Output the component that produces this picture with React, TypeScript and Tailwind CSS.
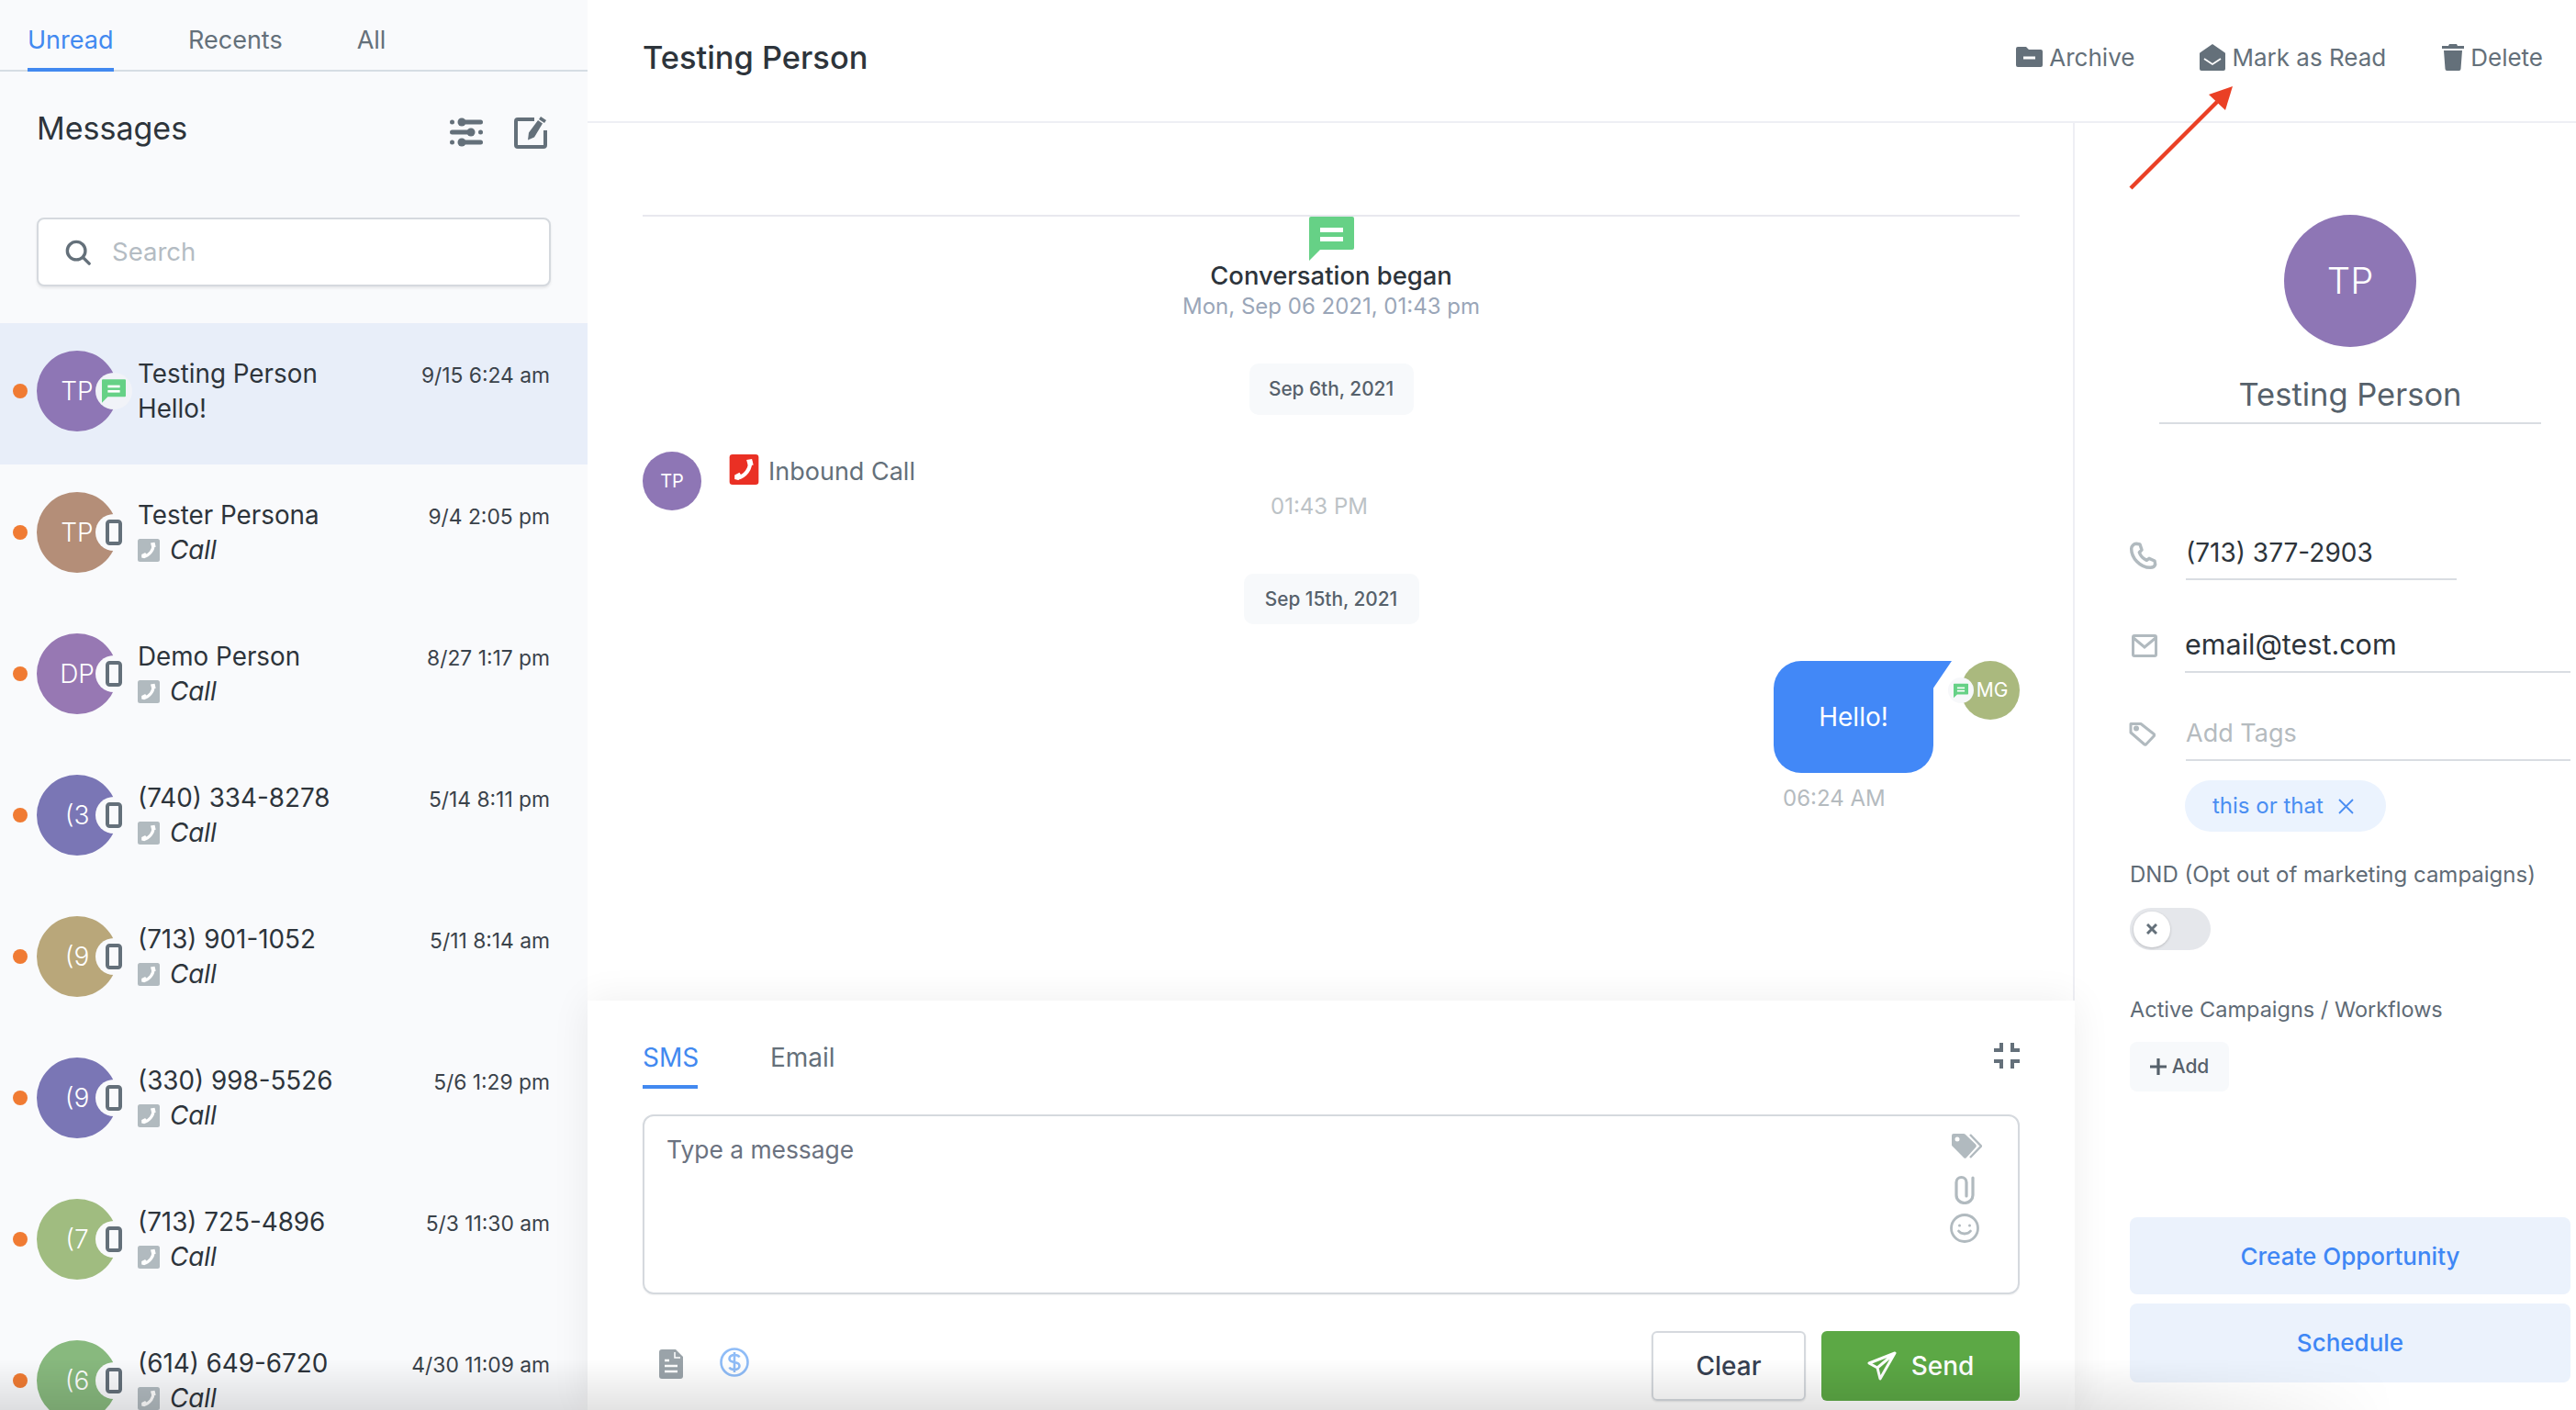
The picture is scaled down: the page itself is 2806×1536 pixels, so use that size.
import React from "react";

const Chat = ({ className = "", fill = "#66d186" }: { className?: string; fill?: string }) => (
  <svg viewBox="0 0 49 48" className={className}>
    <path d="M2 0H47a2 2 0 0 1 2 2V34a2 2 0 0 1-2 2H12L0 48V2a2 2 0 0 1 2-2Z" fill={fill} />
    <rect x="12" y="12" width="25" height="5" fill="#fff" />
    <rect x="12" y="22" width="25" height="5" fill="#fff" />
  </svg>
);

const PhoneSquare = ({ bg, className = "" }: { bg: string; className?: string }) => (
  <svg viewBox="0 0 24 25" className={className}>
    <rect width="24" height="25" rx="2.5" fill={bg} />
    <path d="M17 5.5C17.5 12 13 18 6.5 19.5" stroke="#fff" strokeWidth="3.2" fill="none" />
    <path d="M14 4.500l4.500-.8 1.200 5-4.300 1zM4.200 17l4-2 2.300 3.600-3.300 2.600-3-.8z" fill="#fff" />
  </svg>
);

const Mobile = () => (
  <svg viewBox="0 0 18 28" className="h-[28px] w-[18px]">
    <rect x="2" y="2" width="14" height="24" rx="2.5" fill="none" stroke="#64707a" strokeWidth="4" />
  </svg>
);

const rows = [
  { i: "TP", c: "bg-[#b48e78]", n: "Tester Persona", t: "9/4 2:05 pm" },
  { i: "DP", c: "bg-[#9778b3]", n: "Demo Person", t: "8/27 1:17 pm" },
  { i: "(3", c: "bg-[#7a76b5]", n: "(740) 334-8278", t: "5/14 8:11 pm" },
  { i: "(9", c: "bg-[#b9a77a]", n: "(713) 901-1052", t: "5/11 8:14 am" },
  { i: "(9", c: "bg-[#7a76b5]", n: "(330) 998-5526", t: "5/6 1:29 pm" },
  { i: "(7", c: "bg-[#a0bc80]", n: "(713) 725-4896", t: "5/3 11:30 am" },
  { i: "(6", c: "bg-[#88b97e]", n: "(614) 649-6720", t: "4/30 11:09 am" },
];

const Row = ({ i, c, n, t, active }: { i: string; c: string; n: string; t: string; active?: boolean }) => (
  <div className={`flex h-[154px] shrink-0 items-start pr-[41px] ${active ? "bg-[#e8eef9]" : ""}`}>
    <span className="ml-[14px] mt-[66px] h-[16px] w-[16px] shrink-0 rounded-full bg-[#f07b33]" />
    <div className={`relative ml-[10px] mt-[30px] flex h-[88px] w-[88px] shrink-0 items-center justify-center rounded-full text-[28px] font-light text-white ${c}`}>
      {i}
      <span className={`absolute left-[64px] top-[24px] flex h-[40px] w-[40px] items-center justify-center rounded-full ${active ? "bg-[#f1f3f8]" : "bg-[#f9fafc]"}`}>
        {active ? <Chat className="h-[30px] w-[26px]" /> : <Mobile />}
      </span>
    </div>
    <div className="ml-[22px] mt-[37px] min-w-0 flex-1 text-[27.8px] leading-[37px] text-[#2d343b]">
      <div className="flex items-baseline justify-between">
        <span>{n}</span>
        <span className="text-[22.8px] text-[#3a424a]">{t}</span>
      </div>
      {active ? (
        <div>Hello!</div>
      ) : (
        <div className="flex items-center">
          <PhoneSquare bg="#b1babf" className="h-[25px] w-[24px]" />
          <span className="ml-[11px] italic">Call</span>
        </div>
      )}
    </div>
  </div>
);

const Pill = ({ children, w }: { children: React.ReactNode; w: string }) => (
  <div className={`mx-auto flex items-center justify-center rounded-[10px] bg-[#f7f9fb] text-[20.8px] font-medium text-[#56616b] ${w}`}>
    {children}
  </div>
);

const Action = ({ icon, label, ml }: { icon: React.ReactNode; label: string; ml: string }) => (
  <div className={`flex items-center gap-[7px] text-[26px] text-[#64707a] ${ml}`}>
    {icon}
    <span>{label}</span>
  </div>
);

export default function App() {
  return (
    <div className="relative flex h-[1536px] w-[2806px] overflow-hidden bg-white [font-family:Inter,sans-serif]">
      {/* Sidebar */}
      <aside className="flex w-[640px] shrink-0 flex-col overflow-hidden bg-[#f9fafc]">
        <div className="flex h-[78px] shrink-0 border-b-2 border-[#d6dde4] pl-[30px] text-[27px] text-[#64707a]">
          <div className="h-[78px] w-[94px] border-b-4 border-[#4289f0] pt-[26px] leading-[36px] text-[#4289f0]">Unread</div>
          <div className="ml-[81px] pt-[26px] leading-[36px]">Recents</div>
          <div className="ml-[81px] pt-[26px] leading-[36px]">All</div>
        </div>
        <div className="mt-[40px] flex h-[44px] shrink-0 items-center pl-[40px] pr-[44px]">
          <span className="text-[34px] leading-[44px] text-[#2d343b]">Messages</span>
          <svg viewBox="0 0 36 32" className="ml-auto mt-[7px] h-[32px] w-[36px]" fill="#64707a">
            <circle cx="2.5" cy="5" r="2.5" /><rect x="10" y="2.5" width="26" height="5" rx="2.5" /><circle cx="13" cy="5" r="4.5" />
            <rect y="13.5" width="26" height="5" rx="2.5" /><circle cx="23" cy="16" r="4.5" /><circle cx="33.5" cy="16" r="2.5" />
            <circle cx="2.5" cy="27" r="2.5" /><rect x="10" y="24.5" width="26" height="5" rx="2.5" /><circle cx="13" cy="27" r="4.5" />
          </svg>
          <svg viewBox="0 0 36 36" className="ml-[34px] mt-[7px] h-[36px] w-[36px]">
            <path d="M22 4H4a2 2 0 0 0-2 2v26a2 2 0 0 0 2 2h28a2 2 0 0 0 2-2V16" fill="none" stroke="#64707a" strokeWidth="4" strokeLinejoin="round" />
            <path d="M26 5l5 3.500-9 15-7 3 1-8zM29 1l6 4-2 3-6-4z" fill="#64707a" />
          </svg>
        </div>
        <div className="ml-[40px] mt-[75px] flex h-[75px] w-[560px] shrink-0 items-center rounded-[8px] border-2 border-[#d5d9de] bg-white pl-[29px] shadow-[0_2px_3px_rgba(0,0,0,0.08)]">
          <svg viewBox="0 0 30 30" className="h-[28px] w-[28px]" fill="none" stroke="#64707a" strokeWidth="3.6" strokeLinecap="round">
            <circle cx="13" cy="13" r="10.5" /><path d="M21 21l7 7" />
          </svg>
          <span className="ml-[23px] text-[27.5px] text-[#b4bcc3]">Search</span>
        </div>
        <div className="mt-[40px] flex flex-col">
          <Row i="TP" c="bg-[#8e76b5]" n="Testing Person" t="9/15 6:24 am" active />
          {rows.map((r, k) => (
            <Row key={k} {...r} />
          ))}
        </div>
      </aside>

      {/* Main */}
      <main className="flex min-w-0 flex-1 flex-col">
        <header className="flex h-[134px] shrink-0 items-center border-b-2 border-[#eeeff4] pb-[6px] pl-[60px]">
          <h1 className="text-[34.4px] font-medium text-[#2d343b]">Testing Person</h1>
          <div className="ml-auto mb-[2px] flex items-center pr-[36px]">
            <Action
              label="Archive"
              ml=""
              icon={
                <svg viewBox="0 0 29 22" className="h-[22px] w-[29px]">
                  <path d="M2 0h9l3 3h13a2 2 0 0 1 2 2v15a2 2 0 0 1-2 2H2a2 2 0 0 1-2-2V2a2 2 0 0 1 2-2Z" fill="#64707a" />
                  <rect x="8" y="10.5" width="13" height="3" fill="#fff" />
                </svg>
              }
            />
            <Action
              label="Mark as Read"
              ml="ml-[71px]"
              icon={
                <svg viewBox="0 0 28 29" className="h-[29px] w-[28px]">
                  <path d="M14 0l13 9a2 2 0 0 1 1 2v16a2 2 0 0 1-2 2H2a2 2 0 0 1-2-2V11a2 2 0 0 1 1-2Z" fill="#64707a" />
                  <path d="M5 16l9 6 9-6" fill="none" stroke="#fff" strokeWidth="1.8" />
                </svg>
              }
            />
            <Action
              label="Delete"
              ml="ml-[61px]"
              icon={
                <svg viewBox="0 0 24 29" className="h-[29px] w-[24px]" fill="#64707a">
                  <path d="M8 0h8l1 2h7v3H0V2h7Z" /><path d="M2 7h20l-1.500 20a2 2 0 0 1-2 2h-13a2 2 0 0 1-2-2Z" />
                </svg>
              }
            />
          </div>
        </header>

        <div className="flex min-h-0 flex-1">
          {/* Conversation */}
          <section className="flex w-[1620px] shrink-0 flex-col shadow-[inset_-2px_0_0_#eeeff4]">
            <div className="mx-[60px] mt-[100px] h-[2px] shrink-0 bg-[#e8e8ef]" />
            <Chat className="mx-auto h-[48px] w-[49px] shrink-0" />
            <div className="text-center text-[27.4px] font-medium leading-[32px] text-[#2d343b]">Conversation began</div>
            <div className="mt-[2px] text-center text-[24px] leading-[32px] text-[#9aa6b8]">Mon, Sep 06 2021, 01:43 pm</div>
            <div className="mt-[46px]">
              <Pill w="h-[56px] w-[179px]">Sep 6th, 2021</Pill>
            </div>
            <div className="mx-[60px] mt-[40px] flex">
              <div className="flex h-[64px] w-[64px] shrink-0 items-center justify-center rounded-full bg-[#8e76b5] text-[20px] text-white">TP</div>
              <div className="ml-[30px] flex-1">
                <div className="flex h-[36px] items-start pt-[3px]">
                  <PhoneSquare bg="#ea3024" className="h-[33px] w-[33px]" />
                  <span className="ml-[10px] text-[27px] leading-[38px] text-[#64707a]">Inbound Call</span>
                </div>
                <div className="mt-[8px] pl-[590px] text-[24px] leading-[32px] text-[#bcc2c6]">01:43 PM</div>
              </div>
            </div>
            <div className="mt-[57px]">
              <Pill w="h-[55px] w-[191px]">Sep 15th, 2021</Pill>
            </div>
            <div className="mx-[60px] mt-[40px] flex justify-end">
              <div className="relative flex h-[122px] w-[174px] items-center justify-center rounded-[30px] rounded-tr-none bg-[#4288f7] text-[28px] text-white">
                Hello!
                <svg viewBox="0 0 21 31" className="absolute left-[173px] top-0 h-[31px] w-[21px]">
                  <path d="M0 0H21L0 31Z" fill="#4288f7" />
                </svg>
              </div>
              <div className="relative ml-[30px] flex h-[64px] w-[64px] items-center justify-center rounded-full bg-[#aab97e] pl-[4px] text-[21px] text-white">
                MG
                <span className="absolute left-[-14px] top-[18px] flex h-[28px] w-[28px] items-center justify-center rounded-full bg-[#f7f8fa]">
                  <Chat className="h-[17px] w-[16px]" />
                </span>
              </div>
            </div>
            <div className="ml-[1302px] mt-[12px] text-[24px] leading-[32px] text-[#b5bbbf]">06:24 AM</div>

            {/* Composer */}
            <div className="relative z-10 mt-auto flex h-[446px] shrink-0 flex-col bg-white px-[60px] pt-[44px] shadow-[0_0_40px_rgba(0,0,0,0.07)]">
              <div className="flex items-start text-[28px] leading-[36px]">
                <div className="h-[52px] w-[60px] border-b-4 border-[#4289f0] text-[#4289f0]">SMS</div>
                <div className="ml-[79px] text-[#64707a]">Email</div>
                <svg viewBox="0 0 28 28" className="ml-auto mt-[2px] h-[28px] w-[28px]" fill="none" stroke="#64707a" strokeWidth="4">
                  <path d="M0 8h8V0M20 0v8h8M0 20h8v8M20 28v-8h8" />
                </svg>
              </div>
              <div className="mt-[28px] flex h-[196px] justify-between rounded-[12px] border-2 border-[#d5d9de] shadow-[0_1px_2px_rgba(0,0,0,0.05)]">
                <span className="ml-[24px] mt-[18px] text-[26.4px] leading-[36px] text-[#6b7280]">Type a message</span>
                <div className="mr-[40px] mt-[19px] flex w-[36px] flex-col items-center">
                  <svg viewBox="0 0 33 27" className="ml-[4px] h-[27px] w-[33px]">
                    <path d="M2 0h11a2 2 0 0 1 1.500.6L26 11.500a2.500 2.500 0 0 1 0 3.500L16 26a2 2 0 0 1-3 0L.6 13.500A2 2 0 0 1 0 12V2a2 2 0 0 1 2-2Z" fill="#b1babf" />
                    <circle cx="6" cy="6" r="2.500" fill="#fff" />
                    <path d="M20 1l12 12.500L20 26" fill="none" stroke="#b1babf" strokeWidth="2.500" />
                  </svg>
                  <svg viewBox="0 0 22 32" className="mt-[18px] h-[32px] w-[22px]" fill="none" stroke="#b1babf" strokeWidth="3.200" strokeLinecap="round">
                    <path d="M20 3v19a9 8.500 0 0 1-18 0V8a5.500 5.500 0 0 1 11 0v15" />
                  </svg>
                  <svg viewBox="0 0 32 32" className="mt-[10px] h-[32px] w-[32px]" fill="none" stroke="#b1babf" strokeWidth="2.800" strokeLinecap="round">
                    <circle cx="16" cy="16" r="14.500" /><path d="M9.500 19c3 4 10 4 13 0" />
                    <circle cx="10.500" cy="13" r="1.500" fill="#b1babf" stroke="none" /><circle cx="21.500" cy="13" r="1.500" fill="#b1babf" stroke="none" />
                  </svg>
                </div>
              </div>
              <div className="mt-[40px] flex items-start">
                <svg viewBox="0 0 26 32" className="ml-[18px] mt-[20px] h-[32px] w-[26px]">
                  <path d="M3 0h15l8 8v21a3 3 0 0 1-3 3H3a3 3 0 0 1-3-3V3a3 3 0 0 1 3-3Z" fill="#9aa3a9" />
                  <path d="M17 3v6h6" fill="none" stroke="#fff" strokeWidth="1.500" />
                  <path d="M6 12h5M6 18h14M6 24h14" stroke="#fff" strokeWidth="2.500" />
                </svg>
                <svg viewBox="0 0 32 32" className="ml-[40px] mt-[18px] h-[32px] w-[32px]" fill="none" stroke="#8fbcf7" strokeWidth="2.600">
                  <circle cx="16" cy="16" r="14.500" />
                  <path d="M21.500 10.500c-1-2-3-2.500-5.500-2.500-3 0-5.500 1.500-5.500 4s2.500 3.500 5.500 4 5.500 1.500 5.500 4-2.500 4-5.500 4c-2.500 0-4.500-.5-5.500-2.500M16 5v22" />
                </svg>
                <div className="ml-auto flex h-[76px] w-[168px] items-center justify-center rounded-[6px] border-2 border-[#d5d9de] text-[28px] font-medium text-[#374151] shadow-[0_1px_2px_rgba(0,0,0,0.1)]">Clear</div>
                <div className="ml-[17px] flex h-[76px] w-[216px] items-center justify-center gap-[16px] rounded-[6px] bg-[#5ca845] text-[28px] font-medium text-white">
                  <svg viewBox="0 0 32 32" className="h-[32px] w-[32px]" fill="none" stroke="#fff" strokeWidth="3" strokeLinejoin="round">
                    <path d="M30 2L2 13l9 5 3 12ZM30 2L11 18" />
                  </svg>
                  Send
                </div>
              </div>
            </div>
          </section>

          {/* Contact */}
          <section className="flex min-w-0 flex-1 flex-col pb-[30px]">
            <div className="ml-[228px] mt-[100px] flex h-[144px] w-[144px] shrink-0 items-center justify-center rounded-full bg-[#8e76b5] text-[40px] font-light text-white">TP</div>
            <div className="ml-[92px] mt-[30px] w-[416px] border-b-2 border-[#d9dde2] pb-[8px] text-center text-[34.5px] leading-[44px] text-[#56616b]">Testing Person</div>

            <div className="mt-[122px] flex">
              <div className="ml-[59px] w-[62px] pt-[5px]">
                <svg viewBox="0 0 24 24" className="h-[32px] w-[32px]" fill="none" stroke="#b1babf" strokeWidth="2.600" strokeLinejoin="round">
                  <path d="M6 2.500l3 .5 1.500 4.500-2 2c.8 2.500 3 5 6 6.500l2-1.500 4.500 2 .5 3c-.5 1.500-2 2.500-4 2.500C9 22 2 14 2 6.500c0-2 2-4 4-4Z" />
                </svg>
              </div>
              <div className="w-[295px] border-b-2 border-[#d9dde2] pb-[10px] text-[28px] leading-[36px] text-[#2d343b]">(713) 377-2903</div>
            </div>
            <div className="mt-[50px] flex">
              <div className="ml-[62px] w-[58px] pt-[9px]">
                <svg viewBox="0 0 28 25" className="h-[25px] w-[28px]" fill="none" stroke="#b1babf" strokeWidth="3">
                  <rect x="1.500" y="1.500" width="25" height="22" rx="1.500" /><path d="M2 4l12 10 12-10" />
                </svg>
              </div>
              <div className="mr-[6px] flex-1 border-b-2 border-[#d9dde2] pb-[9px] text-[30.5px] leading-[40px] text-[#2d343b]">email@test.com</div>
            </div>
            <div className="mt-[48px] flex">
              <div className="ml-[59px] w-[62px] pt-[5px]">
                <svg viewBox="0 0 29 27" className="h-[27px] w-[29px]" fill="none" stroke="#b1babf" strokeWidth="3" strokeLinejoin="round">
                  <path d="M2 2.500h11l14 11a1.500 1.500 0 0 1 .5 2L19 24.500a1.500 1.500 0 0 1-2 .5L2 12Z" /><circle cx="8" cy="7.500" r="1.500" fill="#b1babf" />
                </svg>
              </div>
              <div className="mr-[6px] flex-1 border-b-2 border-[#d9dde2] pb-[10px] text-[27px] leading-[36px] text-[#b5bbbf]">Add Tags</div>
            </div>
            <div className="ml-[120px] mt-[21px] flex h-[56px] w-[219px] items-center rounded-full bg-[#ebf3fe] pl-[30px] text-[24px] text-[#4a8ef2]">
              this or that
              <svg viewBox="0 0 17 17" className="ml-[16px] h-[17px] w-[17px]" fill="none" stroke="#4a8ef2" strokeWidth="1.800">
                <path d="M1 1l15 15M16 1L1 16" />
              </svg>
            </div>
            <div className="ml-[60px] mt-[31px] text-[24px] leading-[32px] text-[#5f6b76]">DND (Opt out of marketing campaigns)</div>
            <div className="ml-[60px] mt-[20px] flex h-[46px] w-[88px] items-center rounded-full bg-[#e5e7eb] pl-[4px]">
              <span className="flex h-[39px] w-[40px] items-center justify-center rounded-full bg-white shadow-[0_1px_3px_rgba(0,0,0,0.2)]">
                <svg viewBox="0 0 12 12" className="h-[12px] w-[12px]" fill="none" stroke="#64707a" strokeWidth="3">
                  <path d="M1 1l10 10M11 1L1 11" />
                </svg>
              </span>
            </div>
            <div className="ml-[60px] mt-[49px] text-[23.5px] leading-[32px] text-[#5f6b76]">Active Campaigns / Workflows</div>
            <div className="ml-[60px] mt-[19px] flex h-[54px] w-[108px] items-center justify-center gap-[6px] rounded-[8px] bg-[#f7f9fb] text-[21px] font-medium text-[#56616b]">
              <svg viewBox="0 0 18 18" className="h-[18px] w-[18px]" fill="none" stroke="#56616b" strokeWidth="3.200"><path d="M9 0v18M0 9h18" /></svg>
              Add
            </div>
            <div className="ml-[60px] mr-[6px] mt-auto flex h-[84px] items-center justify-center rounded-[8px] bg-[#ebf2fc] text-[26px] font-medium text-[#3f87f5]">Create Opportunity</div>
            <div className="ml-[60px] mr-[6px] mt-[10px] flex h-[86px] items-center justify-center rounded-[8px] bg-[#ebf2fc] pb-[2px] text-[26px] font-medium text-[#3f87f5]">Schedule</div>
          </section>
        </div>
      </main>

      {/* Annotation arrow */}
      <svg viewBox="0 0 2806 1536" className="pointer-events-none absolute left-0 top-0 z-20 h-[1536px] w-[2806px]">
        <path d="M2321 205L2415 111" stroke="#ea4025" strokeWidth="4.500" />
        <path d="M2432 94L2406 103 2424 120Z" fill="#ea4025" />
      </svg>

      {/* Window edge shade */}
      <div className="pointer-events-none absolute bottom-0 left-0 z-30 h-[56px] w-full bg-gradient-to-t from-[rgba(0,0,0,0.11)] to-transparent [mask-image:linear-gradient(to_right,black_80%,transparent_93%)]" />
    </div>
  );
}
